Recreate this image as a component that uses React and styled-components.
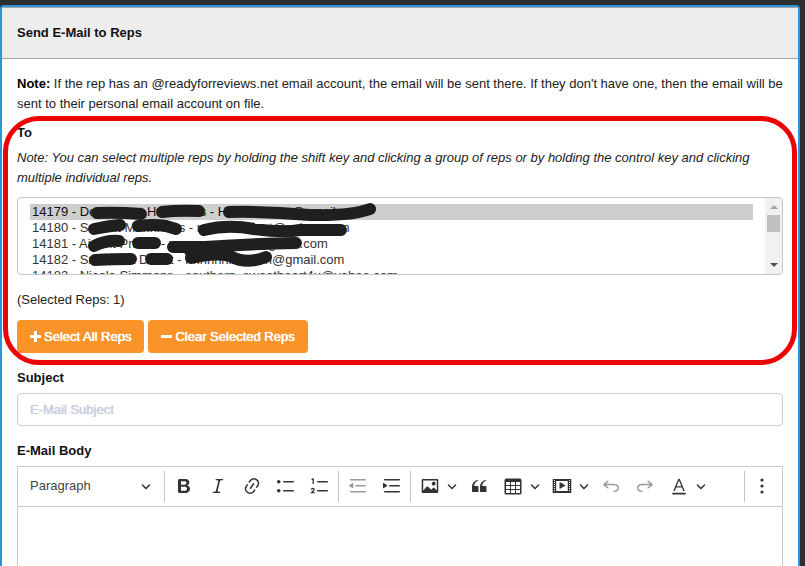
import React, { useState } from 'react';
import styled, { createGlobalStyle } from 'styled-components';

const reps = [
    { id: '14179', label: '14179 - Dennnnnnt Hnnnnnns - Hnnnnnnnns@gmail.com' },
    { id: '14180', label: '14180 - Snnnnt Mnnnnnns - nnnnnnnnnnt@yahoo.com' },
    { id: '14181', label: '14181 - Ainnnt Pnnnn - nnnnnnnnnnnn@gmail.com' },
    { id: '14182', label: '14182 - Snnnnnnt Dnnnt - nnnnnnnnnnnn@gmail.com' },
    { id: '14183', label: '14183 - Nicole Simmons - southern_sweetheart4u@yahoo.com' },
];

const paths = {
    bold: 'M10.187 17H5.773c-.637 0-1.092-.138-1.364-.415-.273-.277-.409-.718-.409-1.323V4.738c0-.617.14-1.062.419-1.332.279-.27.73-.406 1.354-.406h4.68c.69 0 1.288.041 1.793.124.506.083.96.242 1.36.478.341.197.644.447.906.75a3.262 3.262 0 0 1 .808 2.162c0 1.401-.722 2.426-2.167 3.075C15.05 10.175 16 11.315 16 13.01a3.756 3.756 0 0 1-2.296 3.504 6.1 6.1 0 0 1-1.517.377c-.571.073-1.238.11-2 .11zm-.217-6.217H7v4.087h3.069c1.977 0 2.965-.69 2.965-2.072 0-.707-.256-1.22-.768-1.537-.512-.319-1.277-.478-2.296-.478zM7 5.13v3.619h2.606c.729 0 1.292-.067 1.69-.2a1.6 1.6 0 0 0 .91-.765c.165-.267.247-.566.247-.897 0-.707-.26-1.176-.778-1.409-.519-.232-1.31-.348-2.375-.348H7z',
    italic: 'M9.586 14.633l.021.004c-.036.335.095.655.393.962.082.083.173.15.274.201h1.474a.6.6 0 1 1 0 1.2H5.304a.6.6 0 0 1 0-1.2h1.15c.474-.07.809-.182 1.005-.334.157-.122.291-.32.404-.597l2.416-9.55a1.053 1.053 0 0 0-.281-.823 1.12 1.12 0 0 0-.442-.296H8.15a.6.6 0 0 1 0-1.2h6.443a.6.6 0 1 1 0 1.2h-1.195c-.376.056-.65.155-.823.296-.215.175-.423.439-.623.79l-2.366 9.347z',
    link: 'M11.077 15l.991-1.416a.75.75 0 1 1 1.229.86l-1.148 1.64a.748.748 0 0 1-.217.206 5.251 5.251 0 0 1-8.503-5.955.741.741 0 0 1 .12-.274l1.147-1.639a.75.75 0 1 1 1.228.86L4.933 10.7l.006.003a3.75 3.75 0 0 0 6.132 4.294l.006.004zm5.494-5.335a.748.748 0 0 1-.12.274l-1.147 1.639a.75.75 0 1 1-1.228-.86l.86-1.23a3.75 3.75 0 0 0-6.144-4.301l-.86 1.229a.75.75 0 0 1-1.229-.86l1.148-1.64a.748.748 0 0 1 .217-.206 5.251 5.251 0 0 1 8.503 5.955zm-4.563-2.532a.75.75 0 0 1 .184 1.045l-3.155 4.505a.75.75 0 1 1-1.229-.86l3.155-4.506a.75.75 0 0 1 1.045-.184z',
    bullets: 'M7 5.75c0 .414.336.75.75.75h9.5a.75.75 0 1 0 0-1.5h-9.5a.75.75 0 0 0-.75.75zm-6 0C1 4.784 1.777 4 2.75 4c.966 0 1.75.777 1.75 1.75 0 .966-.777 1.75-1.75 1.75C1.784 7.5 1 6.723 1 5.75zm6 9c0 .414.336.75.75.75h9.5a.75.75 0 1 0 0-1.5h-9.5a.75.75 0 0 0-.75.75zm-6 0c0-.966.777-1.75 1.75-1.75.966 0 1.75.777 1.75 1.75 0 .966-.777 1.75-1.75 1.75-.966 0-1.75-.777-1.75-1.75z',
    numberLines: 'M7 5.75c0 .414.336.75.75.75h9.5a.75.75 0 1 0 0-1.5h-9.5a.75.75 0 0 0-.75.75zm0 9c0 .414.336.75.75.75h9.5a.75.75 0 1 0 0-1.5h-9.5a.75.75 0 0 0-.75.75z',
    indentLines: 'M2 3.75c0 .414.336.75.75.75h14.5a.75.75 0 1 0 0-1.5H2.75a.75.75 0 0 0-.75.75zm5 6c0 .414.336.75.75.75h9.5a.75.75 0 1 0 0-1.5h-9.5a.75.75 0 0 0-.75.75zM2.75 16.5h14.5a.75.75 0 1 0 0-1.5H2.75a.75.75 0 1 0 0 1.5z',
    indentArrow: 'M1.632 6.95L5.02 9.358a.4.4 0 0 1-.013.661l-3.39 2.207A.4.4 0 0 1 1 11.892V7.275a.4.4 0 0 1 .632-.326z',
    outdentArrow: 'M4.59 6.95L1.2 9.358a.4.4 0 0 0 .013.661l3.39 2.207a.4.4 0 0 0 .617-.334V7.275a.4.4 0 0 0-.63-.326z',
    image: 'M6.91 10.54c.26-.23.64-.21.88.03l3.36 3.14 2.23-2.06a.64.64 0 0 1 .87 0l2.52 2.97V4.5H3.2v10.12l3.71-4.08zm10.27-7.51c.6 0 1.09.47 1.09 1.05v11.84c0 .59-.49 1.06-1.09 1.06H2.79c-.6 0-1.09-.47-1.09-1.06V4.08c0-.58.49-1.05 1.1-1.05h14.38zm-5.22 5.56a1.96 1.96 0 1 1 3.4-1.96 1.96 1.96 0 0 1-3.4 1.96z',
    quote: 'M3 10.423a6.5 6.5 0 0 1 6.056-6.408l.038.67C6.448 5.423 5.354 7.663 5.22 10H9c.552 0 .5.432.5.986v4.511c0 .554-.448.503-1 .503h-5c-.552 0-.5-.449-.5-1.003v-4.574zm8 0a6.5 6.5 0 0 1 6.056-6.408l.038.67c-2.646.739-3.74 2.979-3.873 5.315H17c.552 0 .5.432.5.986v4.511c0 .554-.448.503-1 .503h-5c-.552 0-.5-.449-.5-1.003v-4.574z',
    table: 'M3 6v3h4V6H3zm0 4v3h4v-3H3zm0 4v3h4v-3H3zm5 3h4v-3H8v3zm5 0h4v-3h-4v3zm4-4v-3h-4v3h4zm0-4V6h-4v3h4zm1.5 8a1.5 1.5 0 0 1-1.5 1.5H3A1.5 1.5 0 0 1 1.5 17V4c.222-.863 1.068-1.5 2-1.5h13c.932 0 1.778.637 2 1.5v13zM12 13v-3H8v3h4zm0-4V6H8v3h4z',
    media: 'M18.68 3.03c.6 0 .59-.03.59.55v12.84c0 .59.01.56-.59.56H1.29c-.6 0-.59.03-.59-.56V3.58c0-.58-.01-.55.6-.55h17.38zM15.77 15V5H4.2v10h11.57zM2 4v1h1V4H2zm0 2v1h1V6H2zm0 2v1h1V8H2zm0 2v1h1v-1H2zm0 2v1h1v-1H2zm0 2v1h1v-1H2zM17 4v1h1V4h-1zm0 2v1h1V6h-1zm0 2v1h1V8h-1zm0 2v1h1v-1h-1zm0 2v1h1v-1h-1zm0 2v1h1v-1h-1zM7.5 6.677a.4.4 0 0 1 .593-.351l5.133 2.824a.4.4 0 0 1 0 .7l-5.133 2.824a.4.4 0 0 1-.593-.35V6.676z',
    undo: 'M5.042 9.367l2.189 1.837a.75.75 0 0 1-.965 1.149l-3.788-3.18a.747.747 0 0 1-.21-.284.75.75 0 0 1 .17-.945L6.23 4.762a.75.75 0 1 1 .964 1.15L4.863 7.866h8.917A.75.75 0 0 1 14 7.9a4 4 0 1 1-1.477 7.718l.344-1.489a2.5 2.5 0 1 0 1.094-4.73l.008-.032H5.042z',
    redo: 'M14.958 9.367l-2.189 1.837a.75.75 0 0 0 .965 1.149l3.788-3.18a.747.747 0 0 0 .21-.284.75.75 0 0 0-.17-.945L13.77 4.762a.75.75 0 1 0-.964 1.15l2.331 1.955H6.22A.75.75 0 0 0 6 7.9a4 4 0 1 0 1.477 7.718l-.344-1.489A2.5 2.5 0 1 1 6.039 9.4l-.008-.032h8.927z',
    color: 'M12.4 10.3L10 4.5l-2.4 5.8h4.8zm.5 1.2H7.1L5.7 15H4.2l5-12h1.6l5 12h-1.5l-1.4-3.5zm3.1 7H4a.75.75 0 0 1 0-1.8h12a.75.75 0 0 1 0 1.8z',
};

const Icon = ({ name, children }) => (
    <svg width="20" height="20" viewBox="0 0 20 20" fill="currentColor" aria-hidden="true">
        {name && <path d={paths[name]} fillRule={name === 'media' ? 'evenodd' : 'nonzero'} />}
        {children}
    </svg>
);

const Chevron = () => (
    <svg width="10" height="10" viewBox="0 0 10 10" fill="currentColor" aria-hidden="true">
        <path d="M.941 4.523a.75.75 0 1 1 1.06-1.06l3.006 3.005 3.005-3.005a.75.75 0 1 1 1.06 1.06l-3.549 3.55a.75.75 0 0 1-1.168-.136L.941 4.523z" />
    </svg>
);

const Sign = ({ d }) => (
    <svg width="11" height="11" viewBox="0 0 11 11" fill="none" stroke="currentColor" strokeWidth="3" aria-hidden="true">
        <path d={d} />
    </svg>
);

// Marker strokes over the names and addresses
const Redaction = () => (
    <Marker width="380" height="76" viewBox="18 198 380 76" aria-hidden="true">
        <path d="M97 213 Q118 212 141 214" />
        <path d="M162 212 Q178 210 199 211" />
        <path d="M229 212 Q260 211 310 215 Q352 216 370 209" />
        <path d="M94 229 Q108 226 120 225" />
        <path d="M138 226 Q154 224 166 226 L176 229" />
        <path d="M204 230 Q228 224 254 229 Q284 233 300 230 L341 230" />
        <path d="M94 246 Q106 240 119 241" />
        <path d="M138 243 L155 243" />
        <path d="M173 247 L205 247 Q250 244 296 243" />
        <path d="M190 251 L222 251" />
        <path d="M95 260 Q115 259 131 259" />
        <path d="M151 259 L167 259" />
        <path d="M191 258 Q216 252 230 256 Q246 265 266 257" />
    </Marker>
);

const App = () => {
    const [selected, setSelected] = useState(['14179']);
    const [subject, setSubject] = useState('');

    return (
        <Page>
            <GlobalStyle />
            <Panel>
                <PanelHeader>
                    <Title>Send E-Mail to Reps</Title>
                </PanelHeader>
                <PanelBody>
                    <Text>
                        <b>Note:</b> If the rep has an @readyforreviews.net email account, the email will be sent there. If they don't have one, then the email will be sent to their personal email account on file.
                    </Text>

                    {/* Recipients */}
                    <Recipients>
                        <Label htmlFor="reps">To</Label>
                        <Hint>Note: You can select multiple reps by holding the shift key and clicking a group of reps or by holding the control key and clicking multiple individual reps.</Hint>
                        <ListBox>
                            <RepList
                                id="reps"
                                multiple
                                size={4}
                                value={selected}
                                onChange={(e) => setSelected([...e.target.selectedOptions].map((o) => o.value))}
                            >
                                {reps.map((rep) => (
                                    <option key={rep.id} value={rep.id}>{rep.label}</option>
                                ))}
                            </RepList>
                            <ScrollBar aria-hidden="true">
                                <Arrow $up />
                                <Thumb />
                                <Arrow />
                            </ScrollBar>
                            <Redaction />
                        </ListBox>
                        <Count>(Selected Reps: {selected.length})</Count>
                        <Actions>
                            <Button type="button" onClick={() => setSelected(reps.map((r) => r.id))}>
                                <Sign d="M0 5.5H11M5.5 0V11" /> Select All Reps
                            </Button>
                            <Button type="button" onClick={() => setSelected([])}>
                                <Sign d="M0 5.5H11" /> Clear Selected Reps
                            </Button>
                        </Actions>
                    </Recipients>

                    {/* Subject */}
                    <Field>
                        <Label htmlFor="subject">Subject</Label>
                        <Input id="subject" type="text" placeholder="E-Mail Subject" value={subject} onChange={(e) => setSubject(e.target.value)} />
                    </Field>

                    {/* Body */}
                    <EditorField>
                        <Label htmlFor="body">E-Mail Body</Label>
                        <Editor>
                            <Toolbar>
                                <Heading>
                                    <HeadingSelect aria-label="Heading">
                                        <option>Paragraph</option>
                                        <option>Heading 1</option>
                                        <option>Heading 2</option>
                                    </HeadingSelect>
                                    <Chevron />
                                </Heading>
                                <Separator />
                                <Group>
                                    <Tool type="button" aria-label="Bold"><Icon name="bold" /></Tool>
                                    <Tool type="button" aria-label="Italic"><Icon name="italic" /></Tool>
                                    <Tool type="button" aria-label="Link"><Icon name="link" /></Tool>
                                    <Tool type="button" aria-label="Bulleted List"><Icon name="bullets" /></Tool>
                                    <Tool type="button" aria-label="Numbered List">
                                        <Icon name="numberLines">
                                            <g fill="none" stroke="currentColor" strokeWidth="1.3">
                                                <path d="M1.6 3.7 L3.2 3 V8" />
                                                <path d="M1.3 13.6 Q1.5 12.4 2.9 12.4 Q4.2 12.5 4 13.7 Q3.8 14.7 1.6 16.7 H4.7" />
                                            </g>
                                        </Icon>
                                    </Tool>
                                </Group>
                                <Separator />
                                <Group>
                                    <Tool type="button" aria-label="Decrease indent" disabled>
                                        <Icon name="indentLines"><path d={paths.outdentArrow} /></Icon>
                                    </Tool>
                                    <Tool type="button" aria-label="Increase indent">
                                        <Icon name="indentLines"><path d={paths.indentArrow} /></Icon>
                                    </Tool>
                                </Group>
                                <Separator />
                                <Group>
                                    <Tool type="button" aria-label="Insert image"><Icon name="image" /></Tool>
                                    <Drop type="button" aria-label="Image options"><Chevron /></Drop>
                                    <Tool type="button" aria-label="Block quote"><Icon name="quote" /></Tool>
                                    <Tool type="button" aria-label="Insert table"><Icon name="table" /></Tool>
                                    <Drop type="button" aria-label="Table options"><Chevron /></Drop>
                                    <Tool type="button" aria-label="Insert media"><Icon name="media" /></Tool>
                                    <Drop type="button" aria-label="Media options"><Chevron /></Drop>
                                    <Tool type="button" aria-label="Undo" disabled><Icon name="undo" /></Tool>
                                    <Tool type="button" aria-label="Redo" disabled><Icon name="redo" /></Tool>
                                    <Tool type="button" aria-label="Font Color"><Icon name="color" /></Tool>
                                    <Drop type="button" aria-label="Font color options"><Chevron /></Drop>
                                </Group>
                                <Spacer />
                                <Separator />
                                <Tool type="button" aria-label="Show more items">
                                    <Icon>
                                        <circle cx="10" cy="4" r="1.6" />
                                        <circle cx="10" cy="10" r="1.6" />
                                        <circle cx="10" cy="16" r="1.6" />
                                    </Icon>
                                </Tool>
                            </Toolbar>
                            <Content id="body" />
                        </Editor>
                    </EditorField>
                </PanelBody>
            </Panel>
        </Page>
    );
};
export default App;

const GlobalStyle = createGlobalStyle`
* {
    box-sizing: border-box;
}
body {
    margin: 0;
    background: #2d2e2e;
    color: #222;
    font-family: "Liberation Sans", Arial, sans-serif;
    font-size: 13px;
    line-height: 20px;
}
button, input, select, textarea {
    font: inherit;
}
`;
const Page = styled.div`
    display: flex;
    min-height: 100vh;
    padding: 5px 5px 0 0;
`;
const Panel = styled.section`
    display: flex;
    flex: 1;
    flex-direction: column;
    min-width: 0;
    border: 2px solid #2b94e0;
    border-bottom: 0;
    border-radius: 4px 4px 0 0;
    background: #fff;
`;
const PanelHeader = styled.header`
    padding: 15px;
    border-top: 1px solid #a9a9a9;
    border-bottom: 1px solid #a5a5a5;
    background: #ededed;
`;
const Title = styled.h1`
    margin: 0;
    color: #111;
    font-size: 13px;
    line-height: 20px;
`;
const PanelBody = styled.div`
    display: flex;
    flex: 1;
    flex-direction: column;
    padding: 15px 15px 0;
`;
const Text = styled.p`
    margin: 0;
    b {
        color: #000;
    }
`;
const Recipients = styled.div`
    position: relative;
    padding-top: 9px;
    /* highlight ring around the recipients block */
    &::after {
        content: "";
        position: absolute;
        inset: 2px -14px -12px;
        border: 5px solid #eb0505;
        border-radius: 36px;
        pointer-events: none;
    }
`;
const Label = styled.label`
    display: block;
    margin-bottom: 5px;
    color: #111;
    font-weight: bold;
`;
const Hint = styled.p`
    margin: 0 0 9px;
    font-style: italic;
`;
const ListBox = styled.div`
    position: relative;
    display: flex;
    overflow: hidden;
    border: 1px solid #c8c4c8;
    border-radius: 4px;
    background: #fff;
`;
const RepList = styled.select`
    flex: 1;
    min-width: 0;
    height: 76px;
    padding: 6px 12px;
    border: 0;
    outline: 0;
    background: transparent;
    color: #333;
    scrollbar-width: none;
    option {
        min-height: 16px;
        padding: 0 2px 1px;
        line-height: 15px;
    }
`;
const ScrollBar = styled.div`
    display: flex;
    flex-direction: column;
    align-items: center;
    width: 17px;
    padding: 7px 0;
    background: #f1f1f1;
`;
const Arrow = styled.span`
    border: 4px solid transparent;
    border-top-width: ${(props) => (props.$up ? '0' : '4px')};
    border-bottom-width: ${(props) => (props.$up ? '4px' : '0')};
    border-top-color: #505050;
    border-bottom-color: #a3a3a3;
`;
const Thumb = styled.span`
    width: 13px;
    height: 17px;
    margin: 6px 0 auto;
    background: #c1c1c1;
`;
const Marker = styled.svg`
    position: absolute;
    top: 0;
    left: 0;
    fill: none;
    stroke: #1f1f1f;
    stroke-width: 12px;
    stroke-linecap: round;
    stroke-linejoin: round;
    pointer-events: none;
`;
const Count = styled.p`
    margin: 15px 0 10px;
`;
const Actions = styled.div`
    display: flex;
    gap: 4px;
`;
const Button = styled.button`
    display: flex;
    align-items: center;
    gap: 3px;
    height: 33px;
    padding: 0 13px;
    border: 0;
    border-radius: 4px;
    background: #fa9429;
    color: #fff;
    text-shadow: 0 0 1px #fff, 0 0 0 #fff;
    cursor: pointer;
`;
const Field = styled.div`
    margin-top: 15px;
`;
const Input = styled.input`
    display: block;
    width: 100%;
    height: 33px;
    padding: 0 12px;
    border: 1px solid #ccc;
    border-radius: 4px;
    color: #333;
    &::placeholder {
        color: #cdd0e0;
        text-shadow: 0 0 1px #cdd0e0, 0 0 0 #cdd0e0;
    }
`;
const EditorField = styled(Field)`
    display: flex;
    flex: 1;
    flex-direction: column;
`;
const Editor = styled.div`
    display: flex;
    flex: 1;
    flex-direction: column;
    border: 1px solid #c9c9cd;
    border-bottom: 0;
`;
const Toolbar = styled.div`
    display: flex;
    align-items: center;
    height: 40px;
    padding: 0 3px 1px;
    border-bottom: 1px solid #c9c9cd;
    color: #333;
`;
const Heading = styled.div`
    display: flex;
    align-items: center;
    width: 143px;
    padding: 0 13px 0 9px;
`;
const HeadingSelect = styled.select`
    flex: 1;
    min-width: 0;
    padding: 0;
    border: 0;
    appearance: none;
    background: transparent;
    color: #444;
`;
const Group = styled.div`
    display: flex;
    padding: 0 1px 0 2px;
`;
const Separator = styled.span`
    width: 1px;
    height: 31px;
    background: #c4c4c8;
`;
const Tool = styled.button`
    display: flex;
    align-items: center;
    justify-content: center;
    width: 34px;
    height: 34px;
    padding: 0;
    border: 0;
    background: transparent;
    color: inherit;
    &:disabled {
        color: #999;
    }
`;
const Drop = styled(Tool)`
    justify-content: flex-start;
    width: 15px;
`;
const Spacer = styled.span`
    flex: 1;
`;
const Content = styled.textarea`
    flex: 1;
    width: 100%;
    min-height: 59px;
    padding: 8px;
    border: 0;
    outline: 0;
    resize: none;
    background: transparent;
`;
